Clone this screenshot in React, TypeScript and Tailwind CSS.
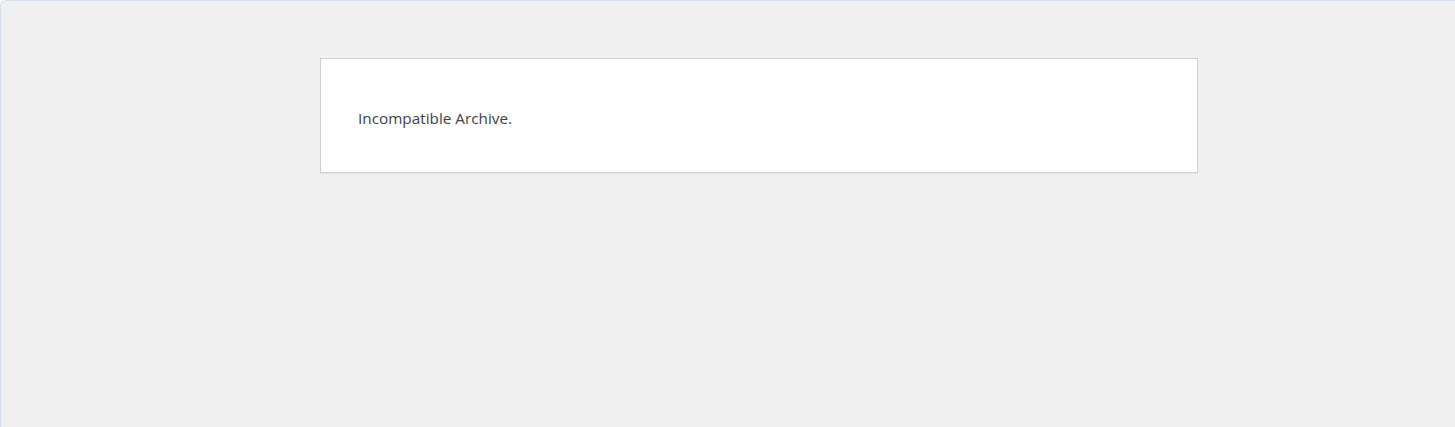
export default function App() {
  return (
    <div className="h-[427px] w-full overflow-hidden rounded-tl-[6px] border-l border-t border-[#d5dfeb] bg-[#f0f0f1]">
      <div className="ml-[319px] mt-[57px] h-[115px] w-[878px] border border-[#ccd0d4] bg-white shadow-[0_1px_1px_rgba(0,0,0,0.04)]">
        <p
          className="pl-[37px] pt-[49px] text-[15.3px] leading-[20px] text-[#3c434a]"
          style={{ fontFamily: '"Open Sans", "Noto Sans", sans-serif' }}
        >
          Incompatible Archive.
        </p>
      </div>
    </div>
  )
}
